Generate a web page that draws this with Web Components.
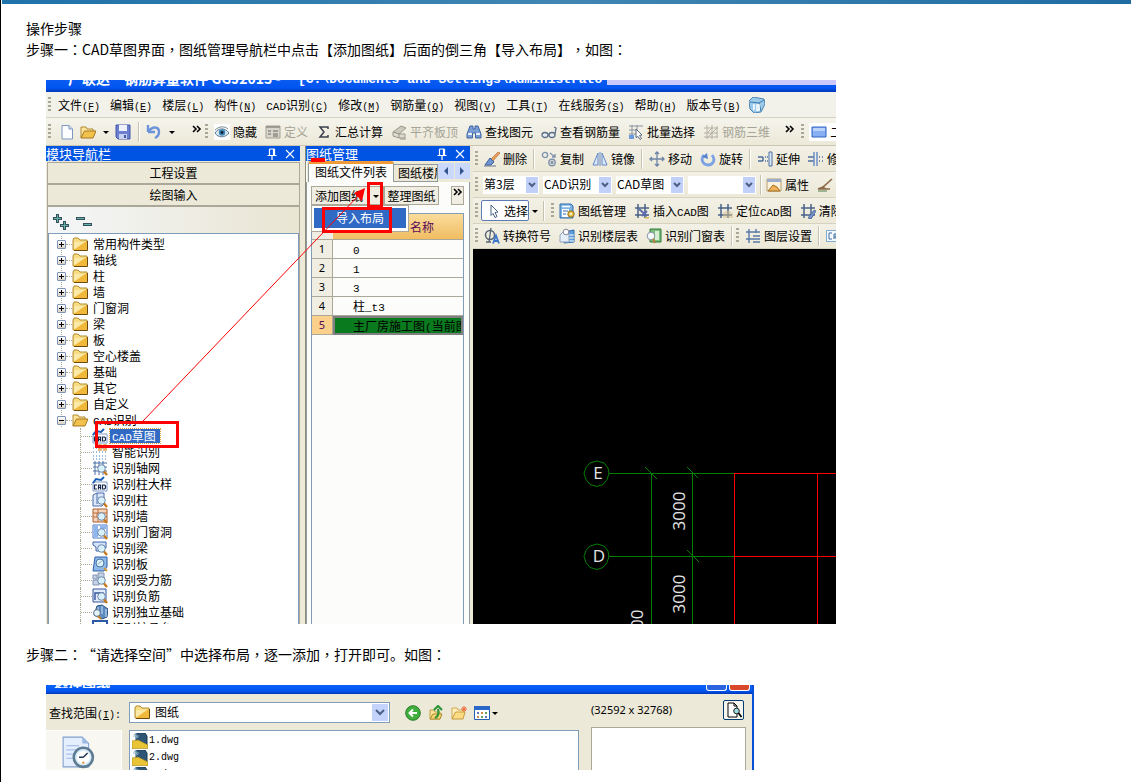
<!DOCTYPE html>
<html lang="zh-CN">
<head>
<meta charset="utf-8">
<title>操作步骤</title>
<style>
html{background:#fff;border-left:1px solid #000;min-height:100%}
body{margin:0;font:14px/21px "Noto Sans CJK SC",sans-serif;color:#000}
</style>
</head>
<body>
<guide-page>
  <step-text text="操作步骤"></step-text>
  <step-text text="步骤一：CAD草图界面，图纸管理导航栏中点击【添加图纸】后面的倒三角【导入布局】，如图："></step-text>
  <cad-workbench></cad-workbench>
  <step-text text="步骤二：“请选择空间”中选择布局，逐一添加，打开即可。如图："></step-text>
  <open-dialog></open-dialog>
</guide-page>
<script>
const BASE = `<style>
*{box-sizing:border-box}
.m{font-family:"Liberation Mono",monospace;font-size:10px;line-height:1px}
.m.w{font-size:11px}
button{font:inherit;color:inherit;background:none;border:0;padding:0;margin:0;white-space:nowrap}
select{font:inherit;color:#000;appearance:none;border-radius:0;margin:0;outline:0}
ul{list-style:none;margin:0;padding:0}
</style>`;
// Latin runs inside Chinese labels are set in a half-width monospace face
const m = s => s.replace(/CAD|[\x21-\x7e]+?(?=CAD|[^\x21-\x7e]|$)/g, r => `<span class="m${r === 'CAD' ? ' w' : ''}">${r}</span>`);
const define = (name, html) => customElements.define(name, class extends HTMLElement {
  constructor() {
    super();
    this.attachShadow({mode: 'open'});
  }
  connectedCallback() {
    this.shadowRoot.innerHTML = BASE + (typeof html === 'function' ? html(this) : html);
  }
});

const lens = `<circle cx="9.500" cy="8.500" r="3.800" fill="#d8f0fa" stroke="#7088a8"/><path d="M12 11.500l3 3.500" stroke="#c87818" stroke-width="2.400"/>`;
const hash = `<path d="M4 1v14M11 1v14M1 5h14M1 12h14" stroke="#4a6288" stroke-width="1.500" fill="none"/>`;
const folder = `<path d="M1 4l1-2h4l2 2h7v10H1z" fill="#f7dc84" stroke="#b08a30"/><path d="M2 6h13v8H2z" fill="#f1b93a"/><path d="M2 6h11L3 13H2z" fill="#fbe9a8"/><path d="M15.500 5v9.500H2" stroke="#6b4a10" fill="none"/>`;
const openFolder = `<path d="M1 14V3h5l1 2h6v2" fill="#fae59a" stroke="#b08a30"/><path d="M1 14L4.500 7H16l-3 7z" fill="#f3c24c" stroke="#a37722"/>`;
const cad = `<path d="M1 6h14v9H1z" fill="#fff" stroke="#7d9cd0"/><path d="M1 7l3-4 5 1 3-3" stroke="#1860b8" stroke-width="2" fill="none"/><path d="M5 9H2.500v4H5M6.500 13.500V9h2v4.500M6.500 11.500h2M10.500 9v4h2l1-1v-2l-1-1z" stroke="#16264a" stroke-width="1.200" fill="none"/>`;
const ICONS = {
  app:`<rect width="16" height="16" fill="#2aa3dc"/><path d="M4 3c6 0 9 4 8 9M3 8c2 5 6 6 10 4" stroke="#c8f2ff" stroke-width="2" fill="none"/>`,
  cube:`<path d="M0 4l4-4 11 2 1 5-4 8-7 1-4-4z" fill="#9ccbe9" stroke="#4a86b4"/><path d="M1 5l9 1 5-3M10 6l2 8" stroke="#3c7aaa" fill="none"/><path d="M4 8h1v5M8 8h2v5H8z" stroke="#fff" stroke-width="1.500" fill="none"/>`,
  doc:`<path d="M3 1.500h7l3.500 3.500v10H3z" fill="#fbfdff" stroke="#7c96c0"/><path d="M10 1.500V5h3.500" fill="#cfdef4" stroke="#7c96c0"/>`,
  open:openFolder, folder, openfolder:openFolder,
  save:`<path d="M1 1h14v14H3l-2-2z" fill="#6c7fd0" stroke="#4557a8"/><path d="M4 1h8v6H4z" fill="#eef2fc"/><path d="M4 10h8v5H4z" fill="#c7d0ee"/><path d="M9 11h2v3H9z" fill="#4557a8"/>`,
  undo:`<path d="M2 8V1M2 8h7M2.500 7.500C6 2 13 2 13 8c0 3-2 5-4 6" stroke="#6d93dc" stroke-width="2.400" fill="none"/>`,
  eye:`<path fill="#fff" d="M0 0h16v16H0z"/><path d="M1 9c3-5 10-6 14 0-4 5-11 5-14 0z" fill="#d8e9f3" stroke="#57788e"/><circle cx="8" cy="8.500" r="3.200" fill="#3c84b4"/><circle cx="8" cy="8.500" r="1.400" fill="#123"/><path d="M1 6c4-4 10-4 13-1" stroke="#788" fill="none"/>`,
  form:`<path d="M1 2h14v12H1z" fill="#d8d6cc" stroke="#a4a296"/><path d="M1 3h14M3 7h3M3 10h3M8 7h5M8 10h5M8 12h5" stroke="#8e8c82" stroke-width="1.500"/>`,
  sum:`<path d="M12 5V3H4l4 5-4 5h8v-2" stroke="#3a3f4c" stroke-width="1.500" fill="none"/>`,
  flat:`<path d="M2 8l8-6 5 2-7 6z" fill="#ccc9bd" stroke="#99968a"/><path d="M2 8v4l6 2v-4zM8 10h6v4H8M9 15h6" stroke="#99968a" fill="#dedbd0"/>`,
  find:`<path d="M4 2h3v3h2V2h3l3 8v4H9.500V9h-3v5H1v-4z" fill="#7a9ed4" stroke="#3e64a4"/><path d="M2 10h4M10 10h4" stroke="#e4eefb" stroke-width="2"/>`,
  glasses:`<g fill="#e8edf2" stroke="#5c6f88" stroke-width="1.300"><ellipse cx="4" cy="11" rx="3" ry="2.500"/><ellipse cx="11" cy="11" rx="3" ry="2.500"/><path d="M7 10.500h1M14 10l1-6-2-1" fill="none"/></g>`,
  batch:`<path d="M1 2h14M1 6h8M4 1v14M1 10h7M9 1v6" stroke="#8b93a0" fill="none"/><path d="M1 11h5v4H1z" fill="#6c9ce0"/><path d="M8 5l6 6-2.500.500 2 3-1.500 1-2-3-2 1z" fill="#fff" stroke="#5a6a80"/>`,
  mesh:`<path d="M4 1v14M9 1v14M14 2v12M1 4h14M1 9h14M1 13h14M4 9l5-5M9 9l5-5M4 14l5-5" stroke="#b4b1a4" fill="none"/>`,
  rect:`<path d="M1 3h14v10H1z" fill="#86b0f2" stroke="#2e62c4"/><path d="M2 4h12v3H2z" fill="#b9d3fb"/>`,
  erase:`<path d="M14 1l2 1-7 8-2-2z" fill="#e8a060" stroke="#a86028" stroke-width=".600"/><path d="M6 7l4 4-3 3H1z" fill="#6f97d8" stroke="#3d5f9c"/><path d="M0 15h12" stroke="#68748c"/>`,
  copy:`<g fill="none" stroke="#8093ac" stroke-width="1.400"><circle cx="4" cy="4" r="2.600"/><circle cx="11" cy="11.500" r="3.200"/><circle cx="11" cy="11.500" r="1"/><path d="M9 2l5 4M14 3v3h-3"/></g>`,
  mirror:`<path d="M6 2v12H1zM10 2v12h5zM8 1v14" fill="#dbe8fa" stroke="#6488c4"/>`,
  move:`<path d="M8 1v14M1 8h14M6 3l2-2 2 2M6 13l2 2 2-2M3 6L1 8l2 2M13 6l2 2-2 2" stroke="#6d84a6" stroke-width="1.300" fill="none"/>`,
  rotate:`<path d="M4 4C0 8 3 14 8 14s8-5 4-10" stroke="#7ba2e2" stroke-width="2.800" fill="none"/><path d="M7 2l1 6-6-2z" fill="#5a84ce"/>`,
  extend:`<path d="M1 6h5M1 10h5M6 6v4M8 6h1M8 10h1M10 6h1M10 10h1" stroke="#4d6e9e" stroke-width="1.500"/><path d="M12 1h3v14h-3z" fill="#dce8f8" stroke="#4d6e9e"/>`,
  trim:`<path d="M0 6h6M0 10h6M11 6h1M14 6h1M11 10h1M14 10h1" stroke="#4d6e9e" stroke-width="1.500"/><path d="M6 1v14M9 1v14" stroke="#6b90c8" stroke-width="1.500"/>`,
  prop:`<path d="M1 2h14v12H1z" fill="#fdf3dc" stroke="#b79d6c"/><path d="M1 2h14v3H1z" fill="#9caccc"/><path d="M2 14l5-6 4 2 3 4z" fill="#efb45a" stroke="#a06a20"/>`,
  pen:`<path d="M15 2L6 10 1 12h12M5 10l4 2" stroke="#8d6a48" stroke-width="1.600" fill="none"/><path d="M1 14h9" stroke="#4f7f4a"/>`,
  cursor:`<path d="M5 2l7 7-3 .500 2 4-2 1-2-4-2 2z" fill="#fff" stroke="#4b6487"/>`,
  sheets:`<path d="M1 1h11l2 2v12H1z" fill="#7fb4e8" stroke="#2f6cac"/><path d="M3 6h7v8H3z" fill="#fff"/><path d="M3 3.500h8" stroke="#fff" stroke-width="1.500"/><path d="M4 8h5M4 11h3" stroke="#2f6cac"/><circle cx="12" cy="11" r="3.200" fill="#e6c24c" stroke="#8e7020"/><circle cx="12" cy="11" r="1" fill="#fff"/>`,
  insert:hash+`<path d="M5 6l8 7M8 13l5-5" stroke="#5b6cac" stroke-width="2" fill="none"/><path d="M11 14h4v1.500h-4z" fill="#d7b44a"/>`,
  locate:hash+`<path d="M7 9v6M9 8v7M11 8v7M13 8v7M15 10v5" stroke="#d8c090"/>`,
  clear:hash+`<path d="M8 15l6-8 2 1-5 8z" fill="#7894cc" stroke="#3a5590" stroke-width=".700"/>`,
  phi:`<circle cx="6" cy="7" r="4.500" fill="none" stroke="#596577" stroke-width="1.500"/><path d="M7 0L5 14M2 14h5" stroke="#596577" stroke-width="1.300"/><path d="M9 15.500l3-8 3 8M10 13h4" stroke="#3b78cc" stroke-width="1.800" fill="none"/>`,
  floors:`<path d="M5 4l10-2v12l-10 1z" fill="#5f9ddc" stroke="#2f6cac"/><path d="M6 7h9M6 10h9M6 13h9" stroke="#fff"/><path d="M1 7l4-4 5 4v7H1z" fill="#e5eef8" stroke="#8fa5bd"/><circle cx="7" cy="4" r="2.800" fill="#fbfdff" stroke="#889"/>`,
  doors:`<path d="M4 1h11v13H4z" fill="#7cbc7c" stroke="#2e7a3a"/><path d="M9 3h4v9H9z" fill="#d7efd2"/><circle cx="5" cy="8" r="3.800" fill="#f5fafc" stroke="#8898a8"/><path d="M7 11l2 4" stroke="#b98238" stroke-width="2"/>`,
  layer:`<path d="M4 1v14M11 1v4M1 4h14M1 11h5M8 8h7M6 11h9M8 14h7" stroke="#5878a8" stroke-width="1.400"/>`,
  cadbox:`<path d="M.500 2.500h20v11H.500z" fill="#f4f9fe" stroke="#7faacf"/><path d="M6 5H3v6h3M8 11V6h2v5M8 9h2M13 5v6h2V6z" stroke="#3d6c9c" fill="none"/>`,
  cad,
  smart:`<path d="M1 4h14M1 8h14M1 12h14M1 15h14" stroke="#3b78c4" stroke-dasharray="1 2"/><path d="M7 7V1h2v6M12 7V1h2v6" stroke="#e08a2c" stroke-width="1.300" fill="none"/>`,
  axis:`<path d="M3 1v14M7 1v14M11 1v14M1 3h14M1 7h14M1 11h14" stroke="#4d6ea4" fill="none"/>`+lens,
  column:`<path d="M1 3l4-2h7v11l-2 2H1z" fill="#dde9fa" stroke="#4a6cab"/><path d="M5 1v11" stroke="#4a6cab"/>`+lens,
  wall:`<path d="M1 1h14v13H1z" fill="#f6d7bd" stroke="#a75d30"/><path d="M1 5h14M1 9h14M6 1v4M11 5v4M5 5v4M6 9v5" stroke="#b86a3a"/>`+lens,
  opening:`<path d="M1 1h14v13H1z" fill="#fff" stroke="#4a78c4"/><path d="M2 2h4v11H2zM8 2h6v3H8z" fill="#8db6ee"/>`+lens,
  beam:`<path d="M1 2h13v6H9v3H4V7L1 5z" fill="#d3e4fa" stroke="#3c64ac"/>`+lens,
  slab:`<path d="M3 1h12v10l-3 4H1z" fill="#8db9ea" stroke="#2f5fa4"/><circle cx="8" cy="7" r="4" fill="#dcf2fa" stroke="#4a74a4"/><path d="M6 8l4-3" stroke="#9ab"/><path d="M12 12l3 3" stroke="#d49a3c" stroke-width="2"/>`,
  force:`<path d="M1 3h4v4H1zM6 1h6v5H6zM1 8h6v5H1z" fill="#c5d2e6" stroke="#8494b4"/>`+lens,
  neg:`<path d="M1 1h13v13H1z" fill="#e3ecfa" stroke="#34549c"/><path d="M3 12V5h4v4M7 5h4v4" stroke="#34549c" stroke-width="1.400" fill="none"/>`+lens,
  footing:`<path d="M5 2l5-1 6 4-1 8-5 2-8-4z" fill="#5b8bc0" stroke="#28507c"/><path d="M6 3v9M10 2v8M14 5v8" stroke="#cfe3f4"/><circle cx="5" cy="9" r="3.400" fill="#e4f4fa" stroke="#57708c"/><path d="M6 12l3 3" stroke="#c8862c" stroke-width="2"/>`,
  cap:`<path d="M1 1h14v13H1z" fill="#fff" stroke="#2c5aa4" stroke-width="2"/>`,
  back:`<circle cx="8" cy="8" r="7.300" fill="#3fae3c" stroke="#2a7a2c"/><path d="M12 8H5M8 4.500L4.500 8 8 11.500" stroke="#fff" stroke-width="2" fill="none"/>`,
  up:`<path d="M2 14V5h4l1 2h5v7z" fill="#fae59a" stroke="#c09a40"/><path d="M2 14l3-5h9l-2 5z" fill="#f6d674" stroke="#b08a30"/><path d="M7 13c4-2 4-5 3-9M6 5l4-4 4 4" stroke="#2f9438" stroke-width="2.200" fill="none"/>`,
  newf:`<path d="M1 14V3h5l1 2h6v2" fill="#fdf0bc" stroke="#d0a850"/><path d="M1 14L4.500 7H14l-2 7z" fill="#fbdc84" stroke="#c89a3c"/><path d="M13 1v6M10 4h6M11 2l4 4M15 2l-4 4" stroke="#ee6a3c"/>`,
  views:`<path d="M.500 1.500h15v13H.500z" fill="#fff" stroke="#2460b4"/><path d="M0 1h16v4H0z" fill="#2a68c8"/><path d="M3 7h2v2H3zM11 11h2v2h-2z" fill="#5a78b8"/><path d="M7 7h2v2H7zM3 11h2v2H3z" fill="#d08a50"/><path d="M11 7h2v2h-2zM7 11h2v2H7z" fill="#69a45c"/>`,
  dwg:`<path d="M4 0h9l2 3v10H4z" fill="#2f5576" stroke="#1c3850"/><path d="M1 3h6M4 0v6M2 1l4 4" stroke="#8fb4cc"/><path d="M0 8l6-1 10 5v3.500H0z" fill="#e9c436" stroke="#a88414" stroke-width=".600"/>`,
  recent:`<path d="M1 1h9l3 3v11H1z" fill="#e5eefc" stroke="#7e9fd0" stroke-width=".500"/><path d="M10 1v3h3z" fill="#9cbce6"/><path d="M2.500 5h6M2.500 7h5M2.500 9h3M2.500 11h3" stroke="#a9c2ea" stroke-width=".500"/><circle cx="10.500" cy="10.500" r="4.500" fill="#d9ecf8" stroke="#5e7b94" stroke-width="1.200"/><circle cx="10.500" cy="10.500" r="3" fill="#fff"/><path d="M10.500 10.500l2-2M10.500 10.500H8.500" stroke="#1d3550" stroke-width=".700"/><circle cx="10.500" cy="13" r=".500" fill="#e08a2c"/>`,
  preview:`<path d="M2 1h6l3 3v11H2z" fill="#fff" stroke="#000"/><path d="M8 1v3h3" fill="none" stroke="#000"/><circle cx="10.500" cy="9" r="2.800" fill="#9fdbe2" stroke="#222"/><path d="M12.500 11l3 4" stroke="#000" stroke-width="1.700"/>`,
  tri:`<path d="M5 7h6l-3 3z" fill="#000"/>`,
  more:`<path d="M4 2l3 3-3 3M8 2l3 3-3 3" stroke="#000" stroke-width="1.600" fill="none"/>`,
  pin:`<path d="M5.500 3h5M5.500 3v6M9.500 3v6M10.500 3v6M3.500 9.500h9M8 10v4" stroke="#fff" stroke-width="1.200" fill="none"/>`,
  close:`<path d="M4 4l8 8M12 4l-8 8" stroke="#fff" stroke-width="1.100"/>`,
  expand:`<path d="M4.500 0v9M0 4.500h9M11.500 7v9M7 11.500h9" stroke="#38505c" stroke-width="3"/><path d="M4.500 1v7M1 4.500h7M11.500 8v7M8 11.500h7" stroke="#5fb4a8"/>`,
  collapse:`<path d="M0 4.500h9M7 10.500h9" stroke="#38505c" stroke-width="3"/><path d="M1 4.500h7M8 10.500h7" stroke="#5fb4a8"/>`
};
define('x-icon', el => {
  const n = el.getAttribute('name'), s = +(el.getAttribute('size') || 16);
  const w = n === 'cadbox' ? 21 : s;
  return `<style>:host{display:block;flex:none;width:${w}px;height:${s}px}svg{display:block}</style>
  <svg width="${w}" height="${s}" viewBox="0 0 ${n === 'cadbox' ? 21 : 16} 16" aria-hidden="true">${ICONS[n]}</svg>`;
});
define('tool-grip', `<style>:host{display:block;flex:none;width:3px;height:16px;background:repeating-linear-gradient(#a9a796 0 2px,transparent 2px 4px)}</style>`);
define('tool-sep', `<style>:host{display:block;flex:none;width:2px;height:20px;margin:0 -2px;background:#c5c2b0;border-right:1px solid #fff}</style>`);
define('tool-button', el => `<style>
  :host{display:block;flex:none}
  button{display:flex;align-items:center;gap:3px;font-size:12px;line-height:16px}
  :host([off]) button{color:#a5a395}
  </style><button type="button" ${el.hasAttribute('off') ? 'disabled' : ''}><x-icon name="${el.getAttribute('icon')}"></x-icon><span>${m(el.getAttribute('label'))}</span></button>`);
define('combo-box', el => `<style>
  :host{display:block;flex:none}
  select{display:block;width:100%;height:18px;border:0;padding:0 0 2px 1px;line-height:16px;background:#fff}
  .w{position:relative}
  svg{position:absolute;right:1px;top:1px;pointer-events:none}
  </style><div class="w"><select aria-label="${el.getAttribute('name')}"><option>${el.getAttribute('value')}</option></select>
  <svg width="12" height="16" viewBox="0 0 12 16"><path d="M0 0h12v16H0z" fill="#c0d0f8"/><path d="M3 6l3 3 3-3" stroke="#4d6185" stroke-width="2" fill="none"/></svg></div>`);
define('panel-title', `<style>
  :host{display:flex;align-items:center;height:15px;background:#0054e3;color:#fff;font-size:13px;line-height:15px;overflow:hidden}
  span{flex:1}button{display:block;margin-right:2px}
  </style><span><slot></slot></span><button type="button" aria-label="固定"><x-icon name="pin"></x-icon></button><button type="button" aria-label="关闭"><x-icon name="close"></x-icon></button>`);

// Commas and colons use the face that centres them in their cell
define('step-text', el => `<style>:host{display:block}p{margin:0;text-spacing-trim:space-all}i{font-style:normal;font-family:"Noto Sans CJK TC"}</style>
  <p>${el.getAttribute('text').replace(/[，：]/g, '<i lang="zh-TW">$&</i>')}</p>`);
define('guide-page', `<style>
  :host{display:block}
  header{height:4px;margin-left:1px;background:linear-gradient(90deg,#1f72aa,#4186b3 50%,#1f6ca3)}
  main{padding:14px 25px 12px}
  </style><header></header><main><slot></slot></main>`);

define('menu-bar', `<style>
  :host{display:flex;align-items:center;gap:10px;height:26px;padding:1px 0 0 2px;background:#f3f2ea;border-bottom:1px solid #d5d2c0;font-size:12px;line-height:16px;overflow:hidden}
  tool-grip{margin-right:-3px}
  x-icon{margin-left:-2px}
  </style><tool-grip></tool-grip>${['文件(F)','编辑(E)','楼层(L)','构件(N)','CAD识别(C)','修改(M)','钢筋量(Q)','视图(V)','工具(T)','在线服务(S)','帮助(H)','版本号(B)']
    .map(t => `<button type="button">${m(t).replace(/\((\w)\)/, '(<u>$1</u>)')}</button>`).join('')}<x-icon name="cube"></x-icon>`);

define('main-toolbar', `<style>
  :host{display:flex;align-items:center;gap:8px;height:27px;padding-left:2px;background:linear-gradient(#f5f4ec,#ece9d8);overflow:hidden}
  .v{display:flex;align-items:center;gap:4px;width:149px;flex:none}
  .v x-icon{margin-right:1px}.v .t{margin:0 -3px}
  .v .e{margin-left:8px}
  tool-grip{margin-right:-2px}
  .two{display:flex;flex:1 0 auto;align-items:center;gap:3px;background:#fff;padding:1px 2px;font-size:12px;line-height:16px;margin-left:-1px}
  </style>
  <div class="v"><tool-grip></tool-grip><x-icon name="doc" style="margin-left:6px"></x-icon><x-icon name="open"></x-icon><x-icon class="t" name="tri"></x-icon><x-icon name="save"></x-icon><tool-sep style="margin:0 2px"></tool-sep><x-icon name="undo"></x-icon><x-icon class="t" name="tri"></x-icon><x-icon class="e" name="more"></x-icon></div>
  <tool-grip></tool-grip>
  <tool-button icon="eye" label="隐藏"></tool-button><tool-button off icon="form" label="定义"></tool-button><tool-button icon="sum" label="汇总计算"></tool-button><tool-button off icon="flat" label="平齐板顶"></tool-button><tool-button icon="find" label="查找图元"></tool-button><tool-button icon="glasses" label="查看钢筋量"></tool-button><tool-button icon="batch" label="批量选择"></tool-button><tool-button off icon="mesh" label="钢筋三维"></tool-button>
  <x-icon name="more" style="margin:0 -5px 0 4px"></x-icon><tool-grip></tool-grip><div class="two"><x-icon name="rect"></x-icon>二维</div>`);

define('tree-view', () => {
  const top = ['常用构件类型','轴线','柱','墙','门窗洞','梁','板','空心楼盖','基础','其它','自定义','CAD识别'];
  const kids = [['cad','CAD草图'],['smart','智能识别'],['axis','识别轴网'],['cad','识别柱大样'],['column','识别柱'],['wall','识别墙'],['opening','识别门窗洞'],['beam','识别梁'],['slab','识别板'],['force','识别受力筋'],['neg','识别负筋'],['footing','识别独立基础'],['cap','识别桩承台']];
  return `<style>
  :host{display:block;background:#fff;border:1px solid #7f9db9;border-bottom:0;padding:2px 0 0 8px;font-size:12px;line-height:16px;overflow:hidden}
  li{display:flex;align-items:center;height:16px;white-space:nowrap}
  .top>li{background:repeating-linear-gradient(#a9a796 0 1px,transparent 1px 2px) 4px 0/1px 100% no-repeat}
  .b{width:9px;height:9px;flex:none;border:1px solid #7b94b5;border-radius:1px;background:linear-gradient(#000,#000) center/5px 1px no-repeat,linear-gradient(#000,#000) center/1px 5px no-repeat,linear-gradient(#fff,#d8d2c4)}
  .o{background:linear-gradient(#000,#000) center/5px 1px no-repeat,linear-gradient(#fff,#d8d2c4)}
  .d{width:6px;flex:none;border-top:1px dotted #a9a796}
  .top x-icon{margin-right:5px}
  .k{margin-left:23px}.k li{border-left:1px dotted #a9a796}.k .d{width:11px}
  .s{background:#316ac5;color:#fff;outline:1px dotted #e0a03c;padding:0 4px 0 2px;margin-left:-2px;line-height:14px}
  </style><ul class="top">${top.map((t, i) => `<li><span class="b ${i === 11 ? 'o' : ''}"></span><span class="d"></span><x-icon name="${i === 11 ? 'openfolder' : 'folder'}"></x-icon><span>${m(t)}</span></li>`).join('')}</ul>
  <ul class="k">${kids.map(([c, t], i) => `<li><span class="d"></span><x-icon name="${c}" style="margin-right:4px"></x-icon><span class="${i ? '' : 's'}">${m(t)}</span></li>`).join('')}</ul>`;
});

define('nav-panel', `<style>
  :host{display:flex;flex-direction:column;min-height:0;padding-right:5px;background:#ece9d8;border-right:1px solid #8d8b7c}
  .in{flex:1;min-height:0;display:flex;flex-direction:column;margin:1px 0 0 1px;border:solid #aca899;border-width:1px 1px 0}
  .w{height:22px;flex:none;font-size:12px;line-height:20px;border-bottom:2px solid #aca899;text-align:center}
  .bar{flex:none;display:flex;gap:7px;align-items:center;height:26px;padding:3px 5px 0;background:linear-gradient(90deg,#f4f6f8,#e9e5d3)}
  tree-view{flex:1;min-height:0}
  </style><panel-title>模块导航栏</panel-title><div class="in"><button class="w" type="button">工程设置</button><button class="w" type="button">绘图输入</button>
  <div class="bar"><x-icon name="expand"></x-icon><x-icon name="collapse"></x-icon></div><tree-view></tree-view></div>`);

define('sheet-panel', () => {
  const rows = ['0','1','3','柱_t3'];
  return `<style>
  :host{display:flex;flex-direction:column;min-height:0;padding-right:3px;background:#ece9d8;font-size:12px;line-height:16px}
  .tabs{display:flex;height:21px;flex:none;padding:1px 0 0 1px;border-left:1px solid #fff;align-items:end}
  .tabs .a{height:21px;width:86px;background:#fdfdfb;border:1px solid #919b9c;border-top:3px solid #ee9a38;border-bottom:0;border-radius:3px 3px 0 0;line-height:14px;padding-bottom:3px}
  .tabs .b{height:18px;width:44px;overflow:hidden;padding-left:4px;border:1px solid #919b9c;border-left:0;text-align:left;line-height:16px}
  .sc{display:flex;flex:1;height:16px;align-self:start;margin-top:1px;gap:1px}
  .sc button{flex:1;background:#c9d8fb;display:flex;justify-content:center;align-items:center}
  .body{flex:1;min-height:0;display:flex;flex-direction:column;background:#fcfcfa;border:solid #919b9c;border-width:0 1px;padding:4px 5px 0 4px}
  .row{position:relative;display:flex;height:19px;flex:none;margin-bottom:8px}
  .row button{height:19px;border:1px solid #aca899;background:#f0eee2;line-height:16px}
  .row .x{width:56px;overflow:hidden;padding-left:3px;text-align:left;border-right:0}
  .row .y{width:17px;display:flex;justify-content:center;align-items:center}
  .row .z{width:55px}
  .row .q{width:13px;margin-left:auto;display:flex;justify-content:center;overflow:hidden}
  .pop{position:absolute;z-index:1;left:0;top:19px;width:98px;height:27px;padding:2px 2px 4px;background:#fff;border:1px solid #aca899}
  .pop button{display:block;width:100%;height:20px;border:0;background:#316ac5;color:#fff;line-height:18px}
  .g{flex:1;min-height:0;overflow:hidden;border:1px solid #7f9db9;border-bottom:0}
  table{border-collapse:separate;border-spacing:0;width:100%;table-layout:fixed}
  th,td{padding:0;font-weight:400;height:19px;line-height:16px;border-bottom:1px solid #aca899;white-space:nowrap;overflow:hidden}
  thead th{height:26px;background:linear-gradient(#fbdc9c,#f0bd62);color:#5a0a5a;text-align:right;padding-right:29px}
  thead th:first-child{background:#f0eee2}
  tbody th{background:#f0eee2;border-right:1px solid #aca899;font-size:11px;font-family:"Noto Sans",sans-serif}
  td{padding-left:20px}
  td .m{font-size:11px}
  .cur th{background:#fbd08a;color:#5a0a5a}
  .cur td{background:#0a7a1e;border:2px solid #808080;padding-left:18px;line-height:14px}
  </style><panel-title>图纸管理</panel-title>
  <div class="tabs"><button type="button" class="a">图纸文件列表</button><button type="button" class="b">图纸楼层</button><div class="sc"><button type="button" aria-label="左"><svg width="6" height="8"><path d="M5 0v8L1 4z" fill="#35538f"/></svg></button><button type="button" aria-label="右"><svg width="6" height="8"><path d="M1 0v8l4-4z" fill="#35538f"/></svg></button></div></div>
  <div class="body"><div class="row"><button type="button" class="x">添加图纸</button><button type="button" class="y" aria-label="展开"><x-icon name="tri"></x-icon></button><button type="button" class="z">整理图纸</button><button type="button" class="q" aria-label="更多"><x-icon name="more"></x-icon></button>
  <div class="pop"><button type="button">导入布局</button></div></div>
  <div class="g"><table><colgroup><col style="width:21px"><col></colgroup><thead><tr><th></th><th>名称</th></tr></thead><tbody>${rows.map((r, i) => `<tr><th>${i + 1}</th><td>${m(r)}</td></tr>`).join('')}<tr class="cur"><th>5</th><td>主厂房施工图${m('(')}当前图</td></tr></tbody></table></div></div>`;
});

define('edit-toolbars', `<style>
  :host{display:block;background:#ece9d8;font-size:12px;line-height:16px;overflow:hidden}
  .r{display:flex;align-items:center;gap:8px;height:26px;padding-left:2px;background:linear-gradient(#f3f1e6,#ece9d8);border-bottom:1px solid #d5d2c0;white-space:nowrap}
  .r>tool-grip:first-child{margin-right:-2px}
  .r .g2{margin:0 -2px 0 -3px}
  .r.c{gap:4px}.r.c>tool-grip:first-child{margin-right:1px}.c tool-sep{margin:0}
  .sel{display:flex;align-items:center;gap:2px;width:51px;height:21px;padding-left:4px;border:1px solid #5d7cb4;border-radius:2px;background:#fff}
  .t{margin:0 -6px 0 -10px}
  </style>
  <div class="r"><tool-grip></tool-grip><tool-button icon="erase" label="删除"></tool-button><tool-sep></tool-sep><tool-button icon="copy" label="复制"></tool-button><tool-button icon="mirror" label="镜像"></tool-button><tool-sep></tool-sep><tool-button icon="move" label="移动"></tool-button><tool-button icon="rotate" label="旋转"></tool-button><tool-sep></tool-sep><tool-button icon="extend" label="延伸"></tool-button><tool-button icon="trim" label="修剪"></tool-button></div>
  <div class="r c"><tool-grip></tool-grip><combo-box name="楼层" value="第3层" style="width:56px"></combo-box><combo-box name="类型" value="CAD识别" style="width:69px"></combo-box><combo-box name="构件" value="CAD草图" style="width:68px"></combo-box><combo-box name="图元" value="" style="width:68px"></combo-box><tool-sep></tool-sep><tool-button icon="prop" label="属性" style="margin-right:4px"></tool-button><tool-button icon="pen" label="编辑"></tool-button></div>
  <div class="r"><tool-grip></tool-grip><button type="button" class="sel" style="margin-left:-3px"><x-icon name="cursor"></x-icon>选择</button><x-icon name="tri" class="t"></x-icon><tool-sep></tool-sep><tool-grip></tool-grip><tool-button icon="sheets" label="图纸管理" style="margin-left:-3px"></tool-button><tool-button icon="insert" label="插入CAD图"></tool-button><tool-button icon="locate" label="定位CAD图"></tool-button><tool-button icon="clear" label="清除"></tool-button></div>
  <div class="r" style="height:25px"><tool-grip></tool-grip><tool-button icon="phi" label="转换符号"></tool-button><tool-button icon="floors" label="识别楼层表"></tool-button><tool-button icon="doors" label="识别门窗表"></tool-button><tool-sep></tool-sep><tool-grip class="g2"></tool-grip><tool-button icon="layer" label="图层设置"></tool-button><tool-sep></tool-sep><x-icon name="cadbox"></x-icon></div>`);

define('cad-canvas', `<style>:host{display:block;background:#000;overflow:hidden}svg{display:block;width:100%;height:100%}text{font-family:"Open Sans",sans-serif;font-size:17px;fill:#e4e4e4;text-anchor:middle}</style>
  <svg viewBox="0 0 363 375" preserveAspectRatio="xMinYMin slice" fill="none">
  <g stroke="#008000"><path d="M136 224.500h125M136 307.500h125M178.500 224v151M219.500 224v151M172 218l12 12M214 218l11 11M214 301l12 12"/>
  <path d="M124 212l7 2 4 5 1 5.500-2 6-4 5-6 2-7-2-4-5-2-6 2-6 4-4.500z"/><path d="M124 295l7 2 4 5 1 5.500-2 6-4 5-6 2-7-2-4-5-2-6 2-6 4-4.500z"/></g>
  <path d="M261 224.500h102M261 307.500h102M261.500 224v151M344.500 224v151" stroke="#f00"/>
  <text x="125" y="230">E</text><text x="126" y="313">D</text>
  <text transform="translate(212 262) rotate(-90)">3000</text><text transform="translate(212 345) rotate(-90)">3000</text><text transform="translate(170 380) rotate(-90)">9000</text></svg>`);

define('callout-layer', `<style>:host{display:block;position:absolute;inset:0;z-index:2;pointer-events:none}svg{display:block;width:100%;height:100%}</style>
  <svg viewBox="0 0 790 544" preserveAspectRatio="xMinYMin slice"><g fill="none" stroke="#f00"><g stroke-width="3"><rect x="50.500" y="342.500" width="81" height="24"/><rect x="322.500" y="103.500" width="13" height="23"/><rect x="277.500" y="128.500" width="67" height="23"/></g><path d="M97 341L314 114"/></g>
  <path d="M319 108l-11 5 8 8z" fill="#f00"/><path d="M265 78h14v4h-14z" fill="#f00"/></svg>`);

define('cad-workbench', `<style>
  :host{display:block;margin:20px 0 20px 20px}
  figure{position:relative;margin:0;max-width:790px;aspect-ratio:790/544;overflow:hidden;display:flex;flex-direction:column;background:#ece9d8}
  .tb{flex:none;height:12px;overflow:hidden;display:flex;background:linear-gradient(#0a5cf0,#0054f0 8px,#0038b8);color:#fff;font-weight:700}
  .cap{display:flex;align-items:end;width:561px;height:5px;padding-left:5px;gap:4px;white-space:pre;line-height:12px}
  .p{width:226px;flex:none;font-size:14px;line-height:13px}
  .n{font-family:"Liberation Mono",monospace;font-size:13px;line-height:10px}
  .rest{flex:1;height:5px;background:#c9c9fb}
  menu-bar,main-toolbar{flex:none}
  .body{flex:1;min-height:0;display:grid;grid-template:minmax(0,1fr)/260px 167px minmax(0,1fr);border-top:1px solid #c9c6b4}
  .right{display:flex;flex-direction:column;min-height:0}
  cad-canvas{flex:1;min-height:0}
  </style><figure><div class="tb"><div class="cap"><x-icon name="app" size="13"></x-icon><span class="p">广联达—钢筋算量软件 GGJ2013 -</span><span class="n">[C:\\Documents and Settings\\Administrato</span></div><div class="rest"></div></div>
  <menu-bar></menu-bar><main-toolbar></main-toolbar>
  <div class="body"><nav-panel></nav-panel><sheet-panel></sheet-panel><div class="right"><edit-toolbars></edit-toolbars><cad-canvas></cad-canvas></div></div>
  <callout-layer></callout-layer></figure>`);

define('open-dialog', `<style>
  :host{display:block;margin:20px 0 0 20px}
  figure{margin:0;max-width:708px;aspect-ratio:708/85;overflow:hidden;display:flex;flex-direction:column;background:#ece9d8;border-right:2px solid #0a4fd8;font-size:12px;line-height:16px}
  .tb{flex:none;height:9px;display:flex;gap:2px;padding:0 2px 0 8px;background:linear-gradient(#0a62f8,#0054f0 6px,#0038b8)}
  .tb span{flex:1;display:flex;align-items:end;height:3px;overflow:hidden;color:#fff;font-weight:700;font-size:14px;line-height:14px}
  .tb button{width:21px;height:6px;border:1px solid #fff;border-top:0;border-radius:0 0 3px 3px;background:#2a62e0}
  .tb .x{background:#d9482a}
  .c{flex:1;min-height:0;display:grid;grid-template:minmax(0,1fr)/minmax(0,533px) 155px;column-gap:12px}
  .l,.p{display:flex;flex-direction:column;min-height:0}
  .top{display:flex;align-items:center;height:21px;flex:none;margin:8px 0 7px;padding-left:3px}
  label{width:80px;flex:none}
  .cb{position:relative;width:261px;margin-right:15px}
  .cb x-icon{position:absolute;left:5px;top:2px}
  .cb svg{position:absolute;right:2px;top:2px;pointer-events:none}
  select{display:block;width:100%;height:21px;border:1px solid #7f9db9;background:#fff;padding:0 0 1px 25px}
  .top>x-icon{margin-right:7px}
  .low{flex:1;min-height:0;display:grid;grid-template:minmax(0,1fr)/76px minmax(0,1fr);column-gap:7px}
  .side{background:#f8f7f1;border:solid #fff;border-width:1px 1px 0 0;padding:4px 0 0 15px}
  ul{background:#fff;border:1px solid #7f9db9;border-bottom:0;padding:1px 2px;overflow:hidden}
  li{display:flex;align-items:center;gap:1px;height:17px}
  .pt{display:flex;justify-content:space-between;align-items:center;height:20px;margin:6px 2px 7px 0;flex:none;font:11px/16px "Noto Sans",sans-serif}
  .pt button{width:21px;height:20px;border:1px solid #003c74;border-radius:2px;background:#f6f5ee;display:flex;justify-content:center;align-items:center}
  .box{flex:1;background:#fff;border:1px solid #aca899;border-bottom:0}
  </style><figure><div class="tb"><span>选择图纸</span><button type="button" aria-label="帮助"></button><button type="button" class="x" aria-label="关闭"></button></div>
  <div class="c"><div class="l"><div class="top"><label for="s">查找范围<span class="m">(<u>I</u>):</span></label><div class="cb"><select id="s"><option>图纸</option></select><x-icon name="folder"></x-icon><svg width="16" height="17"><path d="M0 0h16v17H0z" fill="#c3d3fb"/><path d="M4 6l4 4 4-4" stroke="#4d6185" stroke-width="2" fill="none"/></svg></div>
  <x-icon name="back"></x-icon><x-icon name="up"></x-icon><x-icon name="newf"></x-icon><x-icon name="views" style="margin-right:-3px"></x-icon><x-icon name="tri"></x-icon></div>
  <div class="low"><div class="side"><x-icon name="recent" size="34"></x-icon></div><ul>${['1.dwg','2.dwg','3.dwg'].map(t => `<li><x-icon name="dwg"></x-icon>${m(t)}</li>`).join('')}</ul></div></div>
  <div class="p"><div class="pt"><span>(32592 x 32768)</span><button type="button" aria-label="预览"><x-icon name="preview"></x-icon></button></div><div class="box"></div></div></div></figure>`);
</script>
</body>
</html>
